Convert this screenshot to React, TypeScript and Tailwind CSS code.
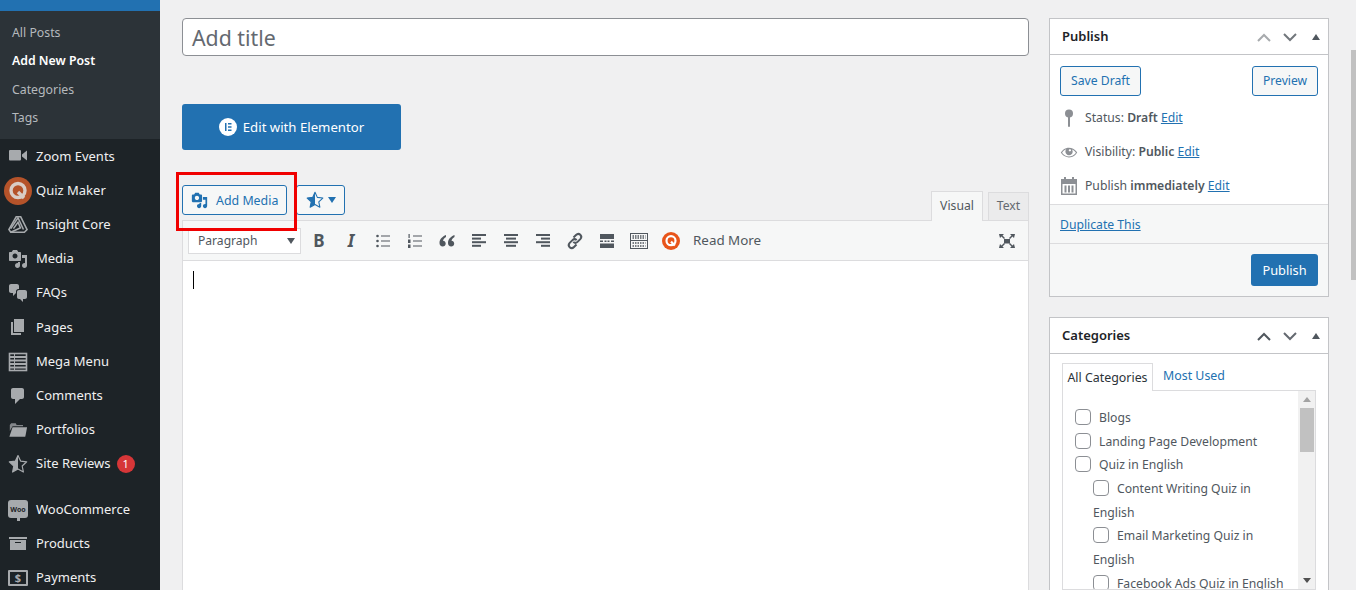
import type { ReactNode } from 'react'

const P = {
  media: 'M13 11V4c0-.55-.45-1-1-1h-1.67L9 1H5L3.67 3H2c-.55 0-1 .45-1 1v7c0 .55.45 1 1 1h10c.55 0 1-.45 1-1zM7 4.5c1.38 0 2.5 1.12 2.5 2.5S8.38 9.5 7 9.5 4.5 8.38 4.5 7 5.62 4.5 7 4.5zM14 6h5v10.5c0 1.38-1.12 2.5-2.5 2.5S14 17.88 14 16.5s1.12-2.5 2.5-2.5c.17 0 .34.02.5.05V9h-3V6zm-4 8.05V13h2v3.5c0 1.38-1.12 2.5-2.5 2.5S7 17.88 7 16.5 8.12 14 9.5 14c.17 0 .34.02.5.05z',
  chat: 'M11 6h-.82C9.07 6 8 7.2 8 8.16V10l-3 3v-3H3c-1.1 0-2-.9-2-2V3c0-1.1.9-2 2-2h6c1.1 0 2 .9 2 2v3zm0 1h6c1.1 0 2 .9 2 2v5c0 1.1-.9 2-2 2h-2v3l-3-3h-1c-1.1 0-2-.9-2-2V9c0-1.1.9-2 2-2z',
  page: 'M6 15V2h10v13H6zm-1 1h8v2H3V5h2v11z',
  comment: 'M5 2h9c1.1 0 2 .9 2 2v7c0 1.1-.9 2-2 2h-2l-5 5v-5H5c-1.1 0-2-.9-2-2V4c0-1.1.9-2 2-2z',
  archive: 'M19 4v2H1V4h18zM2 7h16v10H2V7zm11 3V9H7v1h6z',
  eye: 'M18.3 9.5C15 4.9 8.5 3.8 3.9 7.2c-1.2.9-2.2 2.1-3 3.4.2.4.5.8.8 1.2 3.3 4.6 9.6 5.6 14.2 2.4.9-.7 1.7-1.4 2.4-2.4.3-.4.5-.8.8-1.2-.3-.4-.5-.8-.8-1.1zm-8.2-2.3c.5-.5 1.3-.5 1.8 0s.5 1.3 0 1.8-1.3.5-1.8 0c-.5-.4-.5-1.3 0-1.8zm-.1 7.7c-3.1 0-6-1.6-7.7-4.2C3.5 9 5.1 7.8 7 7c-.7.8-1 1.6-1 2.5 0 2.2 1.7 4.1 4 4.1 2.2 0 4.1-1.7 4.1-4 0-.9-.3-1.8-.9-2.5 1.9.8 3.4 2 4.5 3.7-1.7 2.6-4.6 4.1-7.7 4.1z',
  star: 'M10 1.5l2.6 5.6 6.1.7-4.5 4.2 1.2 6L10 15l-5.4 3 1.2-6L1.3 7.8l6.1-.7z',
  starHalf: 'M10 1.5v13.5l-5.4 3 1.2-6L1.3 7.8l6.1-.7z',
}

function Dash({ d, size = 20, className = '' }: { d: string; size?: number; className?: string }) {
  return (
    <svg width={size} height={size} viewBox="0 0 20 20" fill="currentColor" fillRule="evenodd" className={className}>
      <path d={d} />
    </svg>
  )
}

function Star({ size, outline, fill }: { size: number; outline: string; fill: string }) {
  return (
    <svg width={size} height={size} viewBox="0 0 20 20">
      <path d={P.star} fill="none" stroke={outline} strokeWidth="1.2" strokeLinejoin="round" />
      <path d={P.starHalf} fill={fill} />
    </svg>
  )
}

function QuizIcon({ size, bg, ring }: { size: number; bg: string; ring: string }) {
  return (
    <svg width={size} height={size} viewBox="0 0 28 28">
      <circle cx="14" cy="14" r="14" fill={bg} />
      <circle cx="14" cy="13.5" r="7" fill="none" stroke={ring} strokeWidth="3.4" />
      <path d="M14 15l6 6" stroke={ring} strokeWidth="3.4" />
    </svg>
  )
}

const menuIcons: Record<string, ReactNode> = {
  zoom: (
    <svg width="20" height="20" viewBox="0 0 20 20" fill="currentColor">
      <rect x="1" y="4" width="12" height="10.5" rx="1" />
      <path d="M14 8.5l5-4v10l-5-4z" />
    </svg>
  ),
  quiz: <span className="-ml-[1px] flex"><QuizIcon size={28} bg="#b5532a" ring="#d9cdc6" /></span>,
  insight: (
    <svg width="22" height="22" viewBox="0 0 22 22" fill="none" stroke="currentColor" strokeWidth="1.7">
      <path d="M9 2h5l7 14-3 3H3l-2-3z" />
      <path d="M3 15L11 3l6 13M6 15l5-7 3 7M3 19l11-5" />
    </svg>
  ),
  media: <Dash d={P.media} />,
  chat: <Dash d={P.chat} />,
  page: <Dash d={P.page} />,
  list: (
    <svg width="20" height="20" viewBox="0 0 20 20" fill="none" stroke="currentColor">
      <rect x="1.5" y="1.5" width="17" height="17" strokeWidth="1.6" />
      <path d="M2 5h16M2 8.5h16M2 12h16M2 15.500h16" strokeWidth="2" />
      <path d="M6.500 2v16" strokeWidth="1" />
    </svg>
  ),
  comment: <Dash d={P.comment} />,
  folder: (
    <svg width="22" height="20" viewBox="0 0 22 20" fill="currentColor">
      <path d="M2 11V4.500l1.500-2h5l1 2h7V6H5z" opacity=".75" />
      <path d="M5 7h16l-2 10.500H1.500z" />
    </svg>
  ),
  star: <Star size={20} outline="#a7aaad" fill="#a7aaad" />,
  woo: (
    <span className="relative flex h-[18px] w-[20px] items-center justify-center rounded-[3px] bg-[#a7aaad] text-[7px] font-bold leading-none text-[#1d2327]">
      Woo
      <span className="absolute -bottom-[3px] left-[9px] h-[3px] w-[3px] bg-[#a7aaad]" />
    </span>
  ),
  archive: <Dash d={P.archive} />,
  payments: (
    <span className="flex h-[16px] w-[20px] items-center justify-center rounded-[1px] border-2 border-[#a7aaad] text-[11px] font-bold leading-none text-[#a7aaad]">
      $
    </span>
  ),
}

function MenuItem({ icon, label, badge }: { icon: string; label: string; badge?: string }) {
  return (
    <div className="flex h-[34.2px] items-center pl-[8px] text-[13px] text-[#f0f0f1]">
      <span className="mr-[8px] flex w-[20px] shrink-0 items-center justify-center text-[#a7aaad]">{menuIcons[icon]}</span>
      <span>{label}</span>
      {badge && (
        <span className="ml-[6px] flex h-[18px] w-[18px] items-center justify-center rounded-full bg-[#d63638] text-[11px] text-white">
          {badge}
        </span>
      )}
    </div>
  )
}

function Sidebar() {
  return (
    <div className="h-full w-[160px] shrink-0 overflow-hidden bg-[#1d2327]">
      <div className="h-[11px] bg-[#2271b1]" />
      <div className="bg-[#2c3338] pb-[7px] pt-[8px] text-[12.3px] text-[#b5b9bd]">
        <div className="flex h-[28.33px] items-center pl-[12px]">All Posts</div>
        <div className="flex h-[28.33px] items-center pl-[12px] font-semibold text-white">Add New Post</div>
        <div className="flex h-[28.33px] items-center pl-[12px]">Categories</div>
        <div className="flex h-[28.33px] items-center pl-[12px]">Tags</div>
      </div>
      <MenuItem icon="zoom" label="Zoom Events" />
      <MenuItem icon="quiz" label="Quiz Maker" />
      <MenuItem icon="insight" label="Insight Core" />
      <MenuItem icon="media" label="Media" />
      <MenuItem icon="chat" label="FAQs" />
      <MenuItem icon="page" label="Pages" />
      <MenuItem icon="list" label="Mega Menu" />
      <MenuItem icon="comment" label="Comments" />
      <MenuItem icon="folder" label="Portfolios" />
      <MenuItem icon="star" label="Site Reviews" badge="1" />
      <div className="h-[11px]" />
      <MenuItem icon="woo" label="WooCommerce" />
      <MenuItem icon="archive" label="Products" />
      <MenuItem icon="payments" label="Payments" />
    </div>
  )
}

function Lines({ rows }: { rows: [number, number][] }) {
  return (
    <svg width="20" height="20" viewBox="0 0 20 20" fill="#50575e">
      {rows.map(([x, w], i) => (
        <rect key={i} x={x} y={3 + i * 3.6} width={w} height="2" />
      ))}
    </svg>
  )
}

function ToolBtn({ children }: { children: ReactNode }) {
  return <div className="flex h-[28px] w-[32px] shrink-0 items-center justify-center text-[#50575e]">{children}</div>
}

function Toolbar() {
  return (
    <div className="flex h-[40px] items-center border-b border-[#dcdcde] bg-[#f6f7f7] pl-[5px] pr-[5px]">
      <div className="mr-[2px] flex h-[26px] w-[113px] items-center justify-between border border-[#dcdcde] bg-white pl-[9px] pr-[5px] text-[12.1px] text-[#50575e]">
        <span className="pt-[1px]">Paragraph</span>
        <span className="h-0 w-0 border-x-[4px] border-t-[6px] border-x-transparent border-t-[#50575e]" />
      </div>
      <ToolBtn><span className="text-[17px] font-bold leading-none">B</span></ToolBtn>
      <ToolBtn><span className="text-[17px] font-bold italic leading-none">I</span></ToolBtn>
      <ToolBtn>
        <svg width="20" height="20" viewBox="0 0 20 20" fill="#50575e">
          <circle cx="4.500" cy="5" r="1.300" /><circle cx="4.500" cy="10" r="1.300" /><circle cx="4.500" cy="15" r="1.300" />
          <rect x="8" y="4.500" width="9" height="1" /><rect x="8" y="9.500" width="9" height="1" /><rect x="8" y="14.500" width="9" height="1" />
        </svg>
      </ToolBtn>
      <ToolBtn>
        <svg width="20" height="20" viewBox="0 0 20 20" fill="#50575e">
          <rect x="3.500" y="3" width="1.200" height="4" /><rect x="3" y="8.500" width="2.500" height="3.500" /><rect x="3" y="13.500" width="2.500" height="3.500" />
          <rect x="8" y="4.500" width="9" height="1" /><rect x="8" y="9.500" width="9" height="1" /><rect x="8" y="14.500" width="9" height="1" />
        </svg>
      </ToolBtn>
      <ToolBtn>
        <svg width="20" height="20" viewBox="0 0 20 20" fill="#50575e">
          <path d="M9 4C5.500 5.500 2.500 8 2.500 12c0 2 1.300 3.500 3.200 3.500 1.700 0 3-1.300 3-3s-1.200-2.800-2.700-2.800c.5-1.600 1.600-2.800 3-3.700z" />
          <path d="M17.500 4C14 5.500 11 8 11 12c0 2 1.300 3.500 3.200 3.500 1.700 0 3-1.300 3-3s-1.200-2.800-2.700-2.800c.5-1.600 1.600-2.800 3-3.700z" />
        </svg>
      </ToolBtn>
      <ToolBtn><Lines rows={[[3, 14], [3, 9], [3, 14], [3, 9]]} /></ToolBtn>
      <ToolBtn><Lines rows={[[3, 14], [5, 10], [3, 14], [5, 10]]} /></ToolBtn>
      <ToolBtn><Lines rows={[[3, 14], [8, 9], [3, 14], [8, 9]]} /></ToolBtn>
      <ToolBtn>
        <svg width="20" height="20" viewBox="0 0 20 20" fill="none" stroke="#50575e" strokeWidth="2">
          <path d="M8.500 6.500l2.500-2.500c1.300-1.300 3.200-1.300 4.300-.2s1.200 3 0 4.300l-2.800 2.800c-1.200 1.200-3 1.200-4.200 0" />
          <path d="M11.500 13.500L9 16c-1.300 1.300-3.200 1.300-4.300.2s-1.200-3 0-4.300l2.800-2.800c1.200-1.200 3-1.200 4.200 0" />
        </svg>
      </ToolBtn>
      <ToolBtn>
        <svg width="20" height="20" viewBox="0 0 20 20" fill="#50575e">
          <rect x="3" y="3" width="14" height="5" />
          <rect x="3" y="9.500" width="3" height="1.500" /><rect x="7.500" y="9.500" width="2" height="1.500" /><rect x="10.500" y="9.500" width="2" height="1.500" /><rect x="14" y="9.500" width="3" height="1.500" />
          <rect x="3" y="12.500" width="14" height="4.500" />
        </svg>
      </ToolBtn>
      <ToolBtn>
        <svg width="20" height="20" viewBox="0 0 20 20" fill="none" stroke="#50575e">
          <rect x="1.500" y="2.500" width="17" height="15" />
          <path d="M1.500 9.500h17" />
          <path d="M3.500 5h13M3.500 7h13M3.500 12h13M3.500 15h13" strokeWidth="1.300" strokeDasharray="1.500 1" />
        </svg>
      </ToolBtn>
      <ToolBtn><QuizIcon size={18} bg="#e8541a" ring="#ffffff" /></ToolBtn>
      <span className="ml-[6px] text-[13.4px] text-[#50575e]">Read More</span>
      <div className="ml-auto">
        <ToolBtn>
          <svg width="20" height="20" viewBox="0 0 20 20" fill="#50575e">
            <rect x="7" y="8" width="6" height="4.500" />
            <path d="M2 3h5L5.500 4.500 8 7 7 8 4.500 5.500 3 7zM18 3h-5l1.500 1.500L12 7l1 1 2.500-2.500L17 7zM2 17h5l-1.500-1.500L8 13l-1-1-2.500 2.500L3 13zM18 17h-5l1.500-1.500L12 13l1-1 2.500 2.500L17 13z" />
          </svg>
        </ToolBtn>
      </div>
    </div>
  )
}

function Editor() {
  return (
    <div className="w-[847px]">
      <div className="flex h-[38px] items-center rounded-[4px] border border-[#8c8f94] bg-white pl-[9px] pt-[1px] text-[21.3px] text-[#646970]">
        Add title
      </div>
      <div className="mt-[48px] flex h-[46px] w-[219px] items-center justify-center gap-[6px] rounded-[3px] bg-[#2271b1] text-[13.2px] text-white">
        <svg width="18" height="18" viewBox="0 0 18 18">
          <circle cx="9" cy="9" r="9" fill="#fff" />
          <path d="M6 5h1.500v8H6zM9 5h3.500v1.500H9zM9 8.200h3.500v1.500H9zM9 11.500h3.500V13H9z" fill="#2271b1" />
        </svg>
        <span className="pt-[1px]">Edit with Elementor</span>
      </div>
      <div className="relative mt-[35px] flex h-[35px] items-start">
        <div className="flex h-[30px] w-[105px] items-center gap-[8px] rounded-[3px] border border-[#2271b1] bg-[#f6f7f7] pl-[8px] text-[12.4px] text-[#2271b1]">
          <Dash d={P.media} size={17} />
          <span className="pt-[2px]">Add Media</span>
        </div>
        <div className="ml-[9px] flex h-[30px] w-[49px] items-center justify-center gap-[4px] rounded-[3px] border border-[#2271b1] bg-[#f6f7f7]">
          <Star size={18} outline="#2271b1" fill="#2271b1" />
          <span className="h-0 w-0 border-x-[4px] border-t-[6px] border-x-transparent border-t-[#2271b1]" />
        </div>
        <div className="ml-auto mt-[6px] flex items-end">
          <div className="-mb-px flex h-[30px] w-[52px] items-center justify-center border border-b-0 border-[#dcdcde] bg-[#f6f7f7] pb-[1px] text-[12.2px] text-[#50575e]">Visual</div>
          <div className="ml-[5px] flex h-[28px] w-[41px] items-center justify-center border border-b-0 border-[#dcdcde] bg-[#ebebec] text-[12.2px] text-[#646970]">Text</div>
        </div>
        <div className="absolute -left-[6px] -top-[13px] h-[59px] w-[121px] border-[3px] border-[#f00000]" />
      </div>
      <div className="h-[400px] border border-[#dcdcde] bg-white">
        <Toolbar />
        <div className="ml-[10px] mt-[10px] h-[18px] w-px bg-black" />
      </div>
    </div>
  )
}

function Chevron({ up, color }: { up?: boolean; color: string }) {
  return (
    <svg width="14" height="9" viewBox="0 0 14 9" fill="none" stroke={color} strokeWidth="2">
      <path d={up ? 'M1 8l6-6 6 6' : 'M1 1l6 6 6-6'} />
    </svg>
  )
}

function BoxHeader({ title, upColor, downColor }: { title: string; upColor: string; downColor: string }) {
  return (
    <div className="flex h-[36px] items-center border-b border-[#c3c4c7] pl-[12px] pr-[8px] pt-[1px]">
      <span className="flex-1 text-[13px] font-semibold text-[#1d2327]">{title}</span>
      <Chevron up color={upColor} />
      <span className="ml-[12px] flex"><Chevron color={downColor} /></span>
      <span className="ml-[15px] h-0 w-0 border-x-[4px] border-b-[6px] border-x-transparent border-b-[#50575e]" />
    </div>
  )
}

function MetaRow({ icon, children }: { icon: ReactNode; children: ReactNode }) {
  return (
    <div className="flex h-[34px] items-center pl-[10px] text-[12.2px] text-[#50575e]">
      <span className="mr-[7px] flex w-[18px] justify-center text-[#8c8f94]">{icon}</span>
      <span>{children}</span>
    </div>
  )
}

function Edit() {
  return <a className="text-[#2271b1] underline">Edit</a>
}

function PublishBox() {
  return (
    <div className="border border-[#c3c4c7] bg-white">
      <BoxHeader title="Publish" upColor="#a7aaad" downColor="#72777c" />
      <div className="flex justify-between px-[10px] pt-[11px]">
        <div className="flex h-[30px] w-[81px] items-center justify-center rounded-[3px] border border-[#2271b1] bg-[#f6f7f7] pt-[1px] text-[12.2px] text-[#2271b1]">Save Draft</div>
        <div className="flex h-[30px] w-[66px] items-center justify-center rounded-[3px] border border-[#2271b1] bg-[#f6f7f7] pt-[1px] text-[12.1px] text-[#2271b1]">Preview</div>
      </div>
      <div className="pb-[1px] pt-[5px]">
        <MetaRow
          icon={
            <svg width="18" height="20" viewBox="0 0 18 20" fill="currentColor">
              <circle cx="9" cy="5.500" r="4" />
              <rect x="8" y="8" width="2" height="11" rx="1" />
            </svg>
          }
        >
          Status: <b className="font-semibold">Draft</b> <Edit />
        </MetaRow>
        <MetaRow icon={<Dash d={P.eye} size={20} />}>
          Visibility: <b className="font-semibold">Public</b> <Edit />
        </MetaRow>
        <MetaRow
          icon={
            <svg width="18" height="20" viewBox="0 0 18 20" fill="currentColor">
              <path d="M1 3h3V1h2v2h6V1h2v2h3v16H1zm1.500 5v9.500h13V8z" fillRule="evenodd" />
              <rect x="4.500" y="9.500" width="2" height="7" /><rect x="8" y="9.500" width="2" height="7" /><rect x="11.500" y="9.500" width="2" height="7" />
            </svg>
          }
        >
          Publish <b className="font-semibold">immediately</b> <Edit />
        </MetaRow>
      </div>
      <div className="flex h-[40px] items-center border-y border-[#dcdcde] bg-[#f6f7f7] pl-[10px] pt-[2px] text-[12.2px] text-[#2271b1] underline">
        Duplicate This
      </div>
      <div className="flex h-[52px] items-center justify-end bg-[#f6f7f7] pr-[10px]">
        <div className="flex h-[32px] w-[67px] items-center justify-center rounded-[3px] bg-[#2271b1] pt-[1px] text-[12.8px] text-white">Publish</div>
      </div>
    </div>
  )
}

function Cat({ sub, children }: { sub?: boolean; children: ReactNode }) {
  return (
    <div className={sub ? 'pl-[18px] text-[12.2px] leading-[23.67px] text-[#50575e]' : 'text-[12.2px] leading-[23.67px] text-[#50575e]'}>
      <span className="mr-[8px] inline-block h-[16px] w-[16px] rounded-[4px] border border-[#8c8f94] bg-white align-[-3px]" />
      {children}
    </div>
  )
}

function CategoriesBox() {
  return (
    <div className="mt-[20px] h-[300px] border border-[#c3c4c7] bg-white">
      <BoxHeader title="Categories" upColor="#50575e" downColor="#646970" />
      <div className="px-[12px] pt-[8px]">
        <div className="flex h-[28px] items-end">
          <div className="-mb-px flex h-[28px] w-[91px] items-center justify-center border border-b-0 border-[#dcdcde] bg-white pt-[1px] text-[12.4px] text-[#2c3338]">All Categories</div>
          <div className="self-center pl-[10px] pt-[1px] text-[12.4px] text-[#2271b1]">Most Used</div>
        </div>
        <div className="flex h-[200px] w-[254px] border border-[#dcdcde]">
          <div className="flex-1 overflow-hidden pl-[12px] pr-[6px] pt-[15px]">
            <Cat>Blogs</Cat>
            <Cat>Landing Page Development</Cat>
            <Cat>Quiz in English</Cat>
            <Cat sub>Content Writing Quiz in English</Cat>
            <Cat sub>Email Marketing Quiz in English</Cat>
            <Cat sub>Facebook Ads Quiz in English</Cat>
          </div>
          <div className="flex h-full w-[17px] shrink-0 flex-col items-center bg-[#f1f1f1]">
            <span className="mt-[6px] h-0 w-0 border-x-[4px] border-b-[5px] border-x-transparent border-b-[#a3a3a3]" />
            <div className="mt-[6px] h-[44px] w-[14px] bg-[#c1c1c1]" />
            <span className="mb-[6px] mt-auto h-0 w-0 border-x-[4px] border-t-[5px] border-x-transparent border-t-[#505050]" />
          </div>
        </div>
      </div>
    </div>
  )
}

export default function App() {
  return (
    <div className="relative flex h-[590px] w-[1356px] overflow-hidden bg-[#f0f0f1] [font-family:'Noto_Sans',sans-serif]">
      <Sidebar />
      <div className="flex items-start pl-[22px] pt-[18px]">
        <Editor />
        <div className="ml-[20px] w-[280px]">
          <PublishBox />
          <CategoriesBox />
        </div>
      </div>
      <div className="absolute right-0 top-[50px] h-[230px] w-[5px] bg-[#c1c1c1]" />
    </div>
  )
}
